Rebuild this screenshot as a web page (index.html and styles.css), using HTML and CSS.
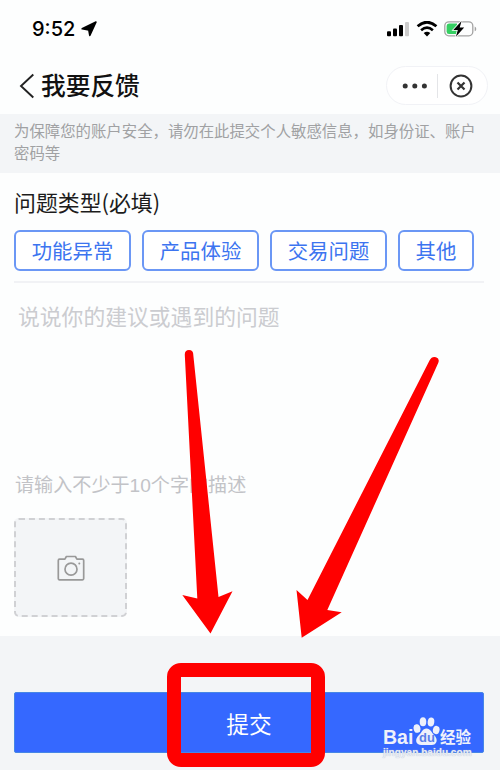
FILE: index.html
```html
<!DOCTYPE html>
<html lang="zh-CN">
<head>
  <meta charset="UTF-8" />
  <title>我要反馈</title>
  <link rel="stylesheet" href="styles.css">
</head>
<body>
<div class="page">
  <div class="status-bar">
    <span class="time">9:52</span>
    <svg class="location" width="16" height="16" viewBox="0 0 16 16">
      <path d="M15 1 8.800 14.400 7.800 8.900 1.200 7.800Z" fill="#000" stroke="#000" stroke-width="1.600" stroke-linejoin="round"/>
    </svg>
    <div class="status-icons">
      <svg width="23" height="16" viewBox="0 0 23 16">
        <rect x="0" y="10.300" width="4" height="5" rx="1"/>
        <rect x="6" y="7.500" width="4" height="7.800" rx="1"/>
        <rect x="12" y="4" width="4" height="11.300" rx="1"/>
        <rect x="18" y="1" width="4" height="14.300" rx="1" fill="#ccc"/>
      </svg>
      <svg width="22" height="16" viewBox="0 0 22 16">
        <path d="M1.600 5.300Q11-2.900 20.400 5.300" fill="none" stroke="#000" stroke-width="2.800"/>
        <path d="M5.100 9.200Q11 4.200 16.900 9.200" fill="none" stroke="#000" stroke-width="2.700"/>
        <path d="M7.700 12q3.300-2.500 6.600 0L11 15.400Z"/>
      </svg>
      <svg width="33" height="18" viewBox="0 0 33 18">
        <rect x=".8" y="1.800" width="28" height="14" rx="4" fill="none" stroke="#a3a3a3" stroke-width="1.300"/>
        <path d="M30.700 6.500v4.800q1.600-.7 1.600-2.400t-1.600-2.400Z" fill="#a3a3a3"/>
        <path d="M5 3.500h8V14H5q-2.400 0-2.400-2.500V6Q2.600 3.500 5 3.500Z" fill="#35cf62"/>
        <path d="M17.600 1 9.300 10h4.500l-1.900 6.700 8.300-9.100h-4.500Z" stroke="#fff" stroke-width="1.600" paint-order="stroke"/>
      </svg>
    </div>
  </div>

  <div class="nav">
    <svg class="back" width="16" height="26" viewBox="0 0 16 26">
      <path d="M14.300 1.500 2 13l12.300 11.500" fill="none" stroke="#222" stroke-width="1.900"/>
    </svg>
    <h1>我要反馈</h1>
    <div class="capsule">
      <svg width="26" height="6" viewBox="0 0 26 6">
        <circle cx="3.200" cy="3" r="2.500"/>
        <circle cx="12.800" cy="3" r="2.500"/>
        <circle cx="22.400" cy="3" r="2.500"/>
      </svg>
      <span class="capsule-line"></span>
      <svg width="24" height="24" viewBox="0 0 24 24">
        <circle cx="12" cy="12" r="10.400" fill="none" stroke="#333" stroke-width="2"/>
        <path d="m8.500 8.500 7 7m0-7-7 7" stroke="#333" stroke-width="2.200"/>
      </svg>
    </div>
  </div>

  <p class="notice">为保障您的账户安全，请勿在此提交个人敏感信息，如身份证、账户密码等</p>

  <div class="form">
    <h2>问题类型(必填)</h2>
    <div class="types">
      <button class="type">功能异常</button>
      <button class="type">产品体验</button>
      <button class="type">交易问题</button>
      <button class="type short">其他</button>
    </div>
    <div class="description">
      <p class="placeholder">说说你的建议或遇到的问题</p>
      <p class="hint">请输入不少于10个字的描述</p>
    </div>
    <div class="upload">
      <svg width="28" height="26" viewBox="0 0 28 26" fill="none" stroke="#999" stroke-width="1.700">
        <path d="M2.500 4.200h5.400l1.500-2.700h9l1.500 2.700h5.600q1.200 0 1.200 1.200v18.200q0 1.200-1.200 1.200h-23q-1.200 0-1.200-1.200V5.400q0-1.200 1.200-1.200Z" stroke-linejoin="round"/>
        <circle cx="14" cy="14.200" r="6"/>
        <circle cx="22.300" cy="8.500" r="1" fill="#999" stroke="none"/>
      </svg>
    </div>
  </div>

  <div class="footer">
    <button class="submit">提交</button>
  </div>

  <!-- arrows and frame pointing at the submit button -->
  <svg class="marks" width="500" height="770" viewBox="0 0 500 770">
    <path d="M184.800 355q-.2-5 4.200-5t4.300 5L218.500 597l14-5.800-22 42.300L182.300 595l15 3.500Z"/>
    <path d="M429.500 360.500q2.500-4.500 6.500-3.200t2.200 5.700L327.300 610l14.400 2.200-40 25.500-5.200-47.700 11 10Z"/>
    <rect x="174" y="670" width="144" height="90" rx="7" fill="none" stroke="#f00" stroke-width="14"/>
  </svg>

  <div class="watermark">
    <div class="brand">
      <span class="bai">Bai</span>
      <span class="paw">
        <svg width="27" height="29" viewBox="0 0 27 29">
          <ellipse cx="4" cy="11.500" rx="3.400" ry="4.300" transform="rotate(-12 4 11.500)"/>
          <ellipse cx="10" cy="4.700" rx="3.300" ry="4.500"/>
          <ellipse cx="18" cy="5" rx="3.300" ry="4.500" transform="rotate(8 18 5)"/>
          <ellipse cx="23.200" cy="13" rx="3.300" ry="4.200" transform="rotate(12 23.200 13)"/>
          <path d="M13.500 11.500c4 0 5 4 7.500 6.500 5 5 2.500 10.500-3 10h-9c-6 .5-8-5.500-3-10 3-2.600 3.500-6.500 7.500-6.500Z"/>
        </svg>
        <span class="du">du</span>
      </span>
      <span class="jingyan">经验</span>
    </div>
    <div class="site">jingyan.baidu.com</div>
  </div>
</div>
</body>
</html>
```
FILE: styles.css
```css
body {
  margin: 0;
  background: #fdfefe;
  font-family: "Liberation Sans", "Noto Sans CJK SC", sans-serif;
  color: #1c1c1c;
}

h1, h2, p {
  margin: 0;
  font-weight: normal;
}

svg {
  display: block;
  flex-shrink: 0;
}

button {
  padding: 0;
  font-family: inherit;
}

.page {
  position: relative;
  width: 500px;
  height: 770px;
  display: flex;
  flex-direction: column;
  overflow: hidden;
}

/* Top of the screen */
.status-bar {
  display: flex;
  align-items: center;
  height: 57px;
  box-sizing: border-box;
  padding: 0 23px 0 32px;
}

.time {
  width: 44px;
  font-family: Inter, sans-serif;
  font-size: 20px;
  font-weight: 500;
  color: #000;
}

.location {
  margin-left: 5px;
}

.status-icons {
  display: flex;
  align-items: center;
  gap: 6px;
  margin-left: auto;
}

.nav {
  display: flex;
  align-items: center;
  height: 57px;
  box-sizing: border-box;
  padding: 0 12px 0 19px;
}

.nav h1 {
  margin-left: 6px;
  padding-top: 2px;
  font-size: 24.7px;
  font-weight: 500;
  line-height: 36px;
  color: #111;
}

.capsule {
  display: flex;
  align-items: center;
  width: 102px;
  height: 39px;
  box-sizing: border-box;
  margin-left: auto;
  padding-left: 15px;
  border: 1px solid #f1f2f6;
  border-radius: 20px;
  background: #fff;
  fill: #333;
}

.capsule-line {
  width: 1px;
  height: 24px;
  margin: 0 11px 0 9px;
  background: #e4e5e8;
}

.notice {
  height: 59px;
  box-sizing: border-box;
  padding: 7px 20px 0 14px;
  background: #f3f5f7;
  font-size: 15.4px;
  line-height: 22px;
  color: #a0a1a3;
}

/* Form */
.form {
  display: flex;
  flex-direction: column;
  height: 463px;
  box-sizing: border-box;
  padding: 14px 16px 0 14px;
}

.form h2 {
  height: 43px;
  font-family: "Noto Sans CJK SC", sans-serif;
  font-size: 21.9px;
  line-height: 29px;
}

.types {
  display: flex;
  gap: 11px;
  padding-bottom: 10px;
  border-bottom: 2px solid #f1f2f5;
}

.type {
  width: 117px;
  height: 41px;
  padding-bottom: 2px;
  border: 2px solid #6b97f5;
  border-radius: 6px;
  background: #fff;
  font-size: 20.4px;
  color: #3c74f0;
}

.type.short {
  width: 76px;
}

.description {
  display: flex;
  flex-direction: column;
  justify-content: space-between;
  height: 235px;
  box-sizing: border-box;
  padding: 19px 0 18px;
}

.placeholder {
  padding-left: 4px;
  font-size: 21.8px;
  line-height: 32px;
  color: #cbccd0;
}

.hint {
  padding-left: 1px;
  font-size: 19.1px;
  line-height: 28px;
  color: #c2c3c7;
}

.upload {
  display: flex;
  align-items: center;
  justify-content: center;
  width: 113px;
  height: 99px;
  box-sizing: border-box;
  border: 2px dashed #d0d1d4;
  border-radius: 5px;
  background: #f3f5f7;
}

.footer {
  flex: 1;
  padding: 56px 16px 0 14px;
  background: #f3f5f7;
}

.submit {
  display: block;
  width: 100%;
  height: 61px;
  padding-top: 2px;
  border: 1px solid #4686e6;
  border-radius: 2px;
  background: #3568ff;
  font-size: 22.7px;
  color: #fff;
}

/* Drawn over the page */
.marks {
  position: absolute;
  top: 0;
  left: 0;
  fill: #f00;
}

.watermark {
  position: absolute;
  left: 383px;
  top: 717px;
  color: #eef1fb;
}

.brand {
  display: flex;
  align-items: flex-end;
  height: 29px;
}

.bai {
  width: 30px;
  font-size: 19.5px;
  font-weight: bold;
  line-height: 17px;
}

.paw {
  position: relative;
  fill: #eef1fb;
}

.du {
  position: absolute;
  left: 6px;
  bottom: 2px;
  font-size: 13px;
  font-weight: bold;
  line-height: 13px;
  color: #5b7fe8;
}

.jingyan {
  font-size: 15.5px;
  font-weight: bold;
  line-height: 16px;
}

.site {
  padding-top: 1px;
  font-size: 10.1px;
  font-weight: bold;
  line-height: 12px;
  white-space: nowrap;
  color: #e8ecf4;
  text-shadow: 0 0 1px #b4bdce;
}
```
